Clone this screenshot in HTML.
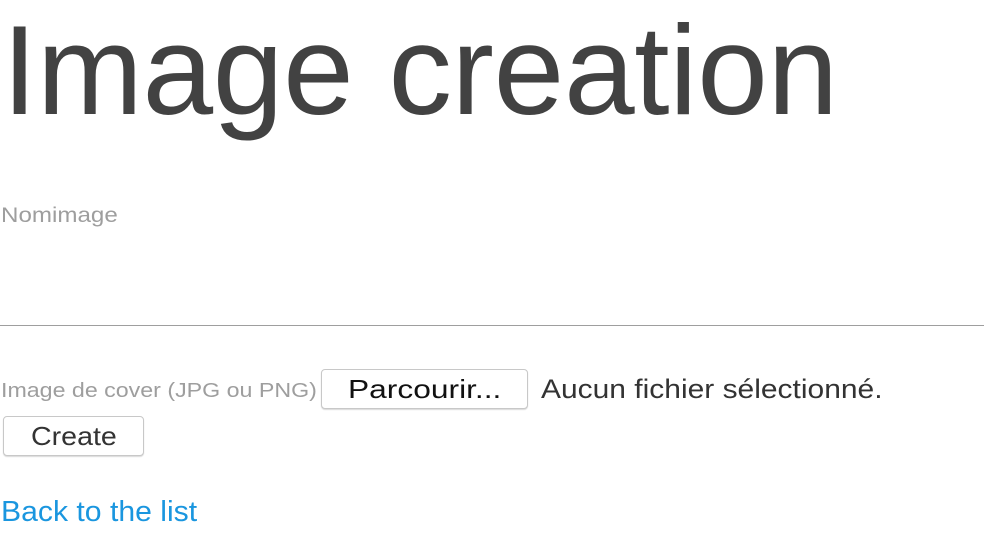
<!DOCTYPE html>
<html><head><style>
body{margin:0;width:984px;height:550px;background:#fff;font-family:"Liberation Sans",sans-serif;position:relative;overflow:hidden}
.a{position:absolute;white-space:nowrap;transform-origin:0 50%}
h1{position:absolute;margin:0;left:2px;top:-10px;font-weight:normal;font-size:127px;color:#424242;line-height:160px;letter-spacing:-0.3px;white-space:nowrap}
.lbl{color:#9e9e9e}
.btn{position:absolute;background:#fff;border:1px solid #c8c8c8;border-radius:4px;box-shadow:0 1px 1px rgba(0,0,0,.15);color:#111;box-sizing:border-box}
.btn span{position:absolute;white-space:nowrap;transform-origin:0 50%}
</style></head><body>
<h1>Image creation</h1>
<div class="a lbl" style="left:1px;top:204px;font-size:21px;transform:scaleX(1.15)">Nomimage</div>
<div class="a" style="left:0;top:325px;width:984px;height:1px;background:#9e9e9e"></div>
<div class="a lbl" style="left:1px;top:380px;font-size:20px;transform:scaleX(1.16)">Image de cover (JPG ou PNG)</div>
<div class="btn" style="left:321px;top:369px;width:207px;height:40px;font-size:26px;line-height:38px"><span style="left:26px;top:0;transform:scaleX(1.22)">Parcourir...</span></div>
<div class="a" style="left:541px;top:374px;font-size:27px;color:#333;transform:scaleX(1.11)">Aucun fichier sélectionné.</div>
<div class="btn" style="left:3px;top:416px;width:141px;height:40px;font-size:26px;line-height:38px;color:#333"><span style="left:27px;top:0;transform:scaleX(1.1)">Create</span></div>
<div class="a" style="left:1px;top:496px;font-size:29px;color:#1a96df;transform:scaleX(1.04)">Back to the list</div>
</body></html>
